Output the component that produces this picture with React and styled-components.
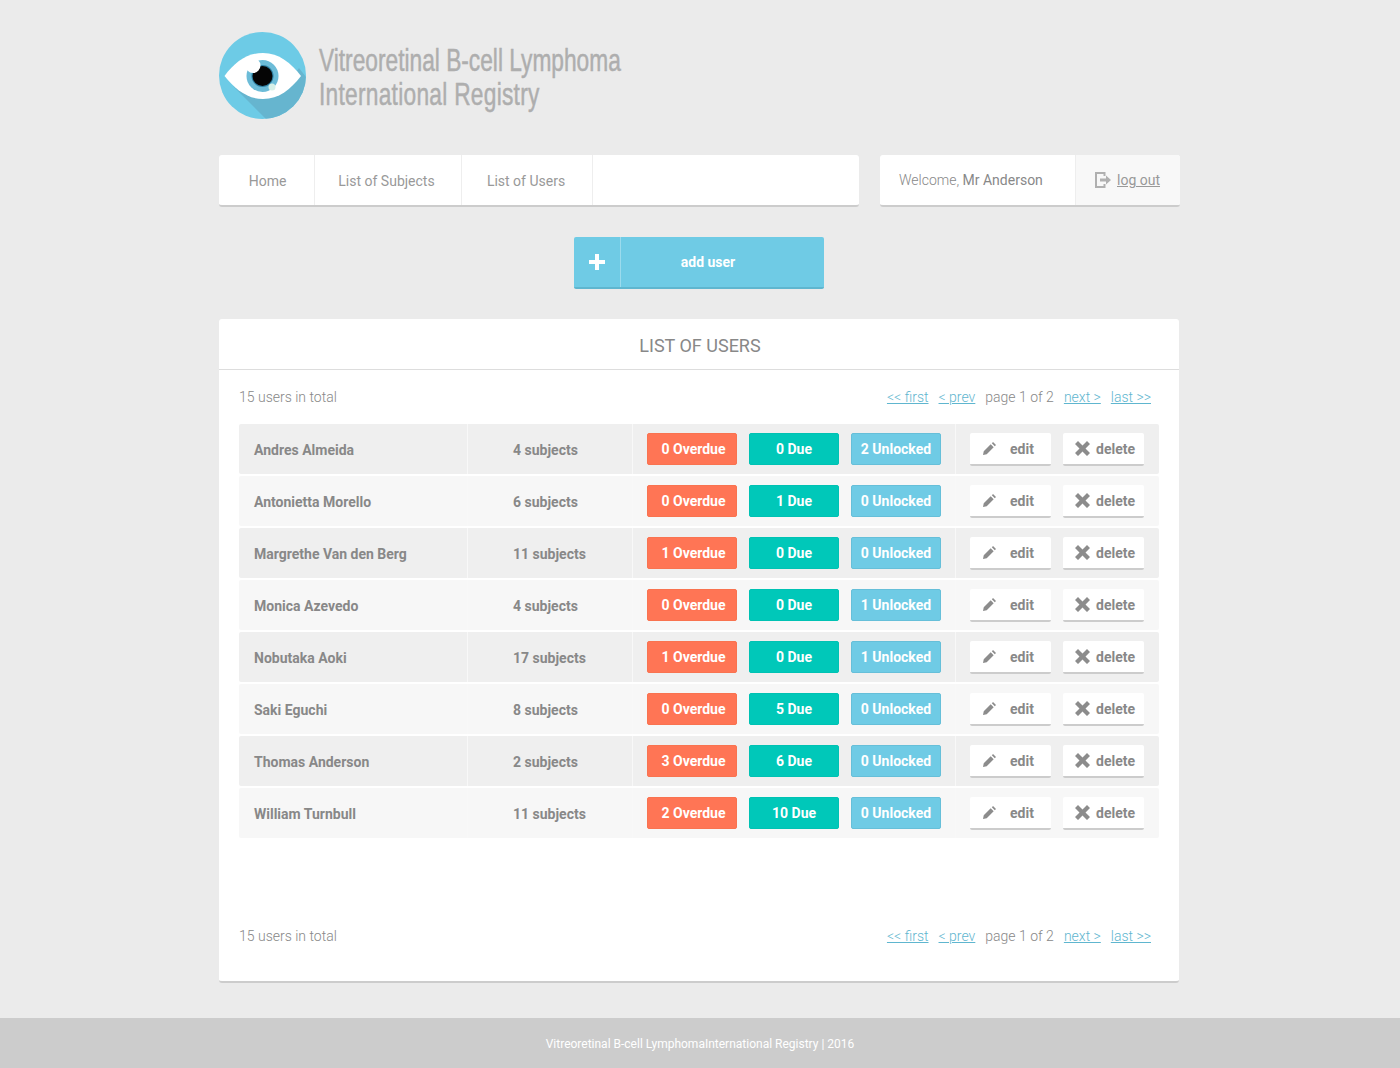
import React from 'react'
import styled, { createGlobalStyle } from 'styled-components'

const Global = createGlobalStyle`
  html, body { margin: 0; padding: 0; background: #ebebeb; }
  body { font-family: Roboto, "Liberation Sans", sans-serif; color: #888; }
  * { box-sizing: border-box; }
`

const Page = styled.div`
  width: 1400px;
  height: 1068px;
  display: flex;
  flex-direction: column;
  overflow: hidden;
`
const Wrap = styled.div`
  width: 961px;
  margin: 0 auto 0 219px;
  flex: 1;
`
const Header = styled.header`
  display: flex;
  align-items: flex-start;
  height: 155px;
  padding-top: 32px;
`
const Title = styled.h1`
  margin: 11px 0 0 13px;
  font-family: "Liberation Sans", sans-serif;
  font-weight: 400;
  font-size: 32px;
  line-height: 34px;
  color: #aeaeae;
  white-space: nowrap;
  -webkit-text-stroke: 0.5px #aeaeae;
  transform: scaleX(0.71);
  transform-origin: left top;
`
const TitleLine = styled.span`
  display: block;
  letter-spacing: ${p => p.$spacing || 0}px;
`
const TopBar = styled.div`
  display: flex;
  justify-content: space-between;
  height: 52px;
`
const Nav = styled.nav`
  width: 640px;
  display: flex;
  background: #fff;
  border-radius: 3px;
  border-bottom: 2px solid #ccc;
`
const NavItem = styled.a`
  width: ${p => p.$w}px;
  display: flex;
  align-items: center;
  justify-content: center;
  padding: 2px ${p => p.$right || 0}px 0 ${p => p.$left || 0}px;
  font-size: 14px;
  color: #999;
  border-right: 1px solid #eee;
`
const UserBox = styled.div`
  width: 300px;
  display: flex;
  background: #fff;
  border-radius: 3px;
  border-bottom: 2px solid #ccc;
  overflow: hidden;
`
const Welcome = styled.div`
  width: 195px;
  padding: 17px 0 0 19px;
  font-size: 14px;
  font-weight: 300;
  color: #888;
  b { font-weight: 400; color: #888; }
`
const Logout = styled.a`
  flex: 1;
  display: flex;
  align-items: center;
  gap: 6px;
  padding-left: 19px;
  background: #f8f8f8;
  border-left: 1px solid #eee;
  font-size: 14px;
  color: #999;
  span { text-decoration: underline; }
`
const AddRow = styled.div`
  display: flex;
  justify-content: center;
  padding: 30px 1px 30px 0;
`
const AddButton = styled.button`
  width: 250px;
  height: 52px;
  padding: 0;
  display: flex;
  background: #6fcbe5;
  border: 0;
  border-bottom: 2px solid #5fb6cf;
  border-radius: 2px;
  color: #fff;
  font-family: inherit;
  font-size: 14px;
  font-weight: 700;
`
const AddIcon = styled.span`
  width: 47px;
  display: flex;
  align-items: center;
  justify-content: center;
  border-right: 1px solid #9bdbed;
`
const AddLabel = styled.span`
  flex: 1;
  display: flex;
  align-items: center;
  justify-content: center;
  padding-right: 29px;
`
const Panel = styled.section`
  width: 960px;
  height: 664px;
  background: #fff;
  border-radius: 3px;
  border-bottom: 2px solid #ccc;
  display: flex;
  flex-direction: column;
`
const PanelTitle = styled.h2`
  margin: 0;
  height: 51px;
  display: flex;
  align-items: center;
  justify-content: center;
  padding: 3px 0 0 2px;
  font-size: 18px;
  font-weight: 400;
  color: #888;
  border-bottom: 1px solid #ddd;
`
const Pager = styled.div`
  display: flex;
  justify-content: space-between;
  align-items: center;
  padding: 0 28px 0 20px;
  height: ${p => p.$h}px;
  font-size: 14px;
  font-weight: 300;
  color: #888;
`
const PageLinks = styled.div`
  display: flex;
  gap: 10px;
  align-items: center;
`
const PageLink = styled.a`
  color: #5fb6cf;
  text-decoration: underline;
`
const Table = styled.div`
  margin: 0 20px;
  display: flex;
  flex-direction: column;
  gap: 2px;
  height: 495px;
`
const Row = styled.div`
  height: 50px;
  display: grid;
  grid-template-columns: 229px 165px 323px 203px;
  background: ${p => (p.$odd ? '#efefef' : '#f7f7f7')};
  border-radius: 2px;
`
const Cell = styled.div`
  display: flex;
  align-items: center;
  border-right: ${p => (p.$last ? 0 : '1px solid #f8f8f8')};
  font-size: 14px;
  font-weight: 700;
  color: #888;
`
const NameCell = styled(Cell)`
  padding: 2px 0 0 15px;
`
const SubjectCell = styled(Cell)`
  padding: 2px 0 0 45px;
`
const BadgeCell = styled(Cell)`
  padding: 0 0 1px 14px;
  gap: 12px;
`
const ActionCell = styled(Cell)`
  padding: 1px 0 0 14px;
  gap: 12px;
`
const Badge = styled.span`
  width: 90px;
  height: 32px;
  display: flex;
  align-items: center;
  justify-content: center;
  padding-left: ${p => p.$pad}px;
  border-radius: 2px;
  color: #fff;
  font-size: 14px;
  font-weight: 700;
  white-space: nowrap;
  background: ${p => p.$bg};
  border: 1px solid ${p => p.$line};
`
const Action = styled.button`
  width: 81px;
  height: 33px;
  display: flex;
  align-items: center;
  padding: 0 0 0 ${p => p.$pad}px;
  gap: ${p => p.$gap}px;
  background: #fff;
  border: 0;
  border-bottom: 2px solid #ccc;
  border-radius: 2px;
  color: #888;
  font-family: inherit;
  font-size: 14px;
  font-weight: 700;
`
const Footer = styled.footer`
  height: 50px;
  padding-top: 2px;
  background: #ccc;
  display: flex;
  align-items: center;
  justify-content: center;
  font-size: 12px;
  color: #fff;
`

const users = [
  ['Andres Almeida', 4, 0, 0, 2],
  ['Antonietta Morello', 6, 0, 1, 0],
  ['Margrethe Van den Berg', 11, 1, 0, 0],
  ['Monica Azevedo', 4, 0, 0, 1],
  ['Nobutaka Aoki', 17, 1, 0, 1],
  ['Saki Eguchi', 8, 0, 5, 0],
  ['Thomas Anderson', 2, 3, 6, 0],
  ['William Turnbull', 11, 2, 10, 0],
]

const Logo = () => (
  <svg width="87" height="87" viewBox="0 0 87 87">
    <defs>
      <clipPath id="disc"><circle cx="43.5" cy="43.5" r="43.5" /></clipPath>
    </defs>
    <circle cx="43.5" cy="43.5" r="43.5" fill="#6dcbe6" />
    <path d="M14 54 L47 87 L87 87 L87 45 L80 36 C66 56 34 66 14 54Z" fill="#66b5cf" clipPath="url(#disc)" />
    <path d="M5.500 44 C16 30 28 21 44 21 C60 21 72 31 82 44 C72 57 60 67 44 67 C28 67 16 57 5.500 44Z" fill="#fff" />
    <circle cx="43.500" cy="44" r="16" fill="#6cbcd8" />
    <circle cx="43.500" cy="44" r="11" fill="#2d7d9f" />
    <circle cx="43.500" cy="44" r="10" fill="#050505" />
    <circle cx="34" cy="33.500" r="7.500" fill="#fff" />
    <circle cx="53" cy="55" r="3.500" fill="#d6f0e8" />
  </svg>
)

const LogoutIcon = () => (
  <svg width="16" height="16" viewBox="0 0 16 16" fill="none">
    <path d="M9.500 4V1H1v14h8.500v-3" stroke="#b0b0b0" strokeWidth="2" />
    <path d="M5 6.500h6V3.500L16 8l-5 4.500v-3H5z" fill="#b0b0b0" />
  </svg>
)

const PlusIcon = () => (
  <svg width="16" height="16" viewBox="0 0 16 16">
    <path d="M6 0h4v6h6v4h-6v6H6v-6H0V6h6z" fill="#fff" />
  </svg>
)

const PencilIcon = () => (
  <svg width="13" height="13" viewBox="0 0 14 14">
    <path d="M0 14l.8-4L8.300 2.500l3.200 3.200L4 13.200z M9.500 1.300L10.800 0 14 3.200l-1.300 1.300z" fill="#8c8c8c" />
  </svg>
)

const CrossIcon = () => (
  <svg width="15" height="15" viewBox="0 0 15 15">
    <path d="M3 0l4.500 4.500L12 0l3 3-4.500 4.500L15 12l-3 3-4.500-4.500L3 15l-3-3 4.500-4.500L0 3z" fill="#8c8c8c" />
  </svg>
)

const Pagination = ({ h }) => (
  <Pager $h={h}>
    <span>15 users in total</span>
    <PageLinks>
      <PageLink>&lt;&lt; first</PageLink>
      <PageLink>&lt; prev</PageLink>
      <span>page 1 of 2</span>
      <PageLink>next &gt;</PageLink>
      <PageLink>last &gt;&gt;</PageLink>
    </PageLinks>
  </Pager>
)

const App = () => (
  <Page>
    <Global />
    <Wrap>
      <Header>
        <Logo />
        <Title>
          <TitleLine>Vitreoretinal B-cell Lymphoma</TitleLine>
          <TitleLine $spacing={0.38}>International Registry</TitleLine>
        </Title>
      </Header>
      <TopBar>
        <Nav>
          <NavItem $w={96} $left={2}>Home</NavItem>
          <NavItem $w={147} $right={3}>List of Subjects</NavItem>
          <NavItem $w={131} $right={2}>List of Users</NavItem>
        </Nav>
        <UserBox>
          <Welcome>Welcome, <b>Mr Anderson</b></Welcome>
          <Logout><LogoutIcon /><span>log out</span></Logout>
        </UserBox>
      </TopBar>
      <AddRow>
        <AddButton>
          <AddIcon><PlusIcon /></AddIcon>
          <AddLabel>add user</AddLabel>
        </AddButton>
      </AddRow>
      <Panel>
        <PanelTitle>LIST OF USERS</PanelTitle>
        <Pagination h={54} />
        <Table>
          {users.map(([name, subjects, overdue, due, unlocked], i) => (
            <Row key={name} $odd={i % 2 === 0}>
              <NameCell>{name}</NameCell>
              <SubjectCell>{subjects} subjects</SubjectCell>
              <BadgeCell>
                <Badge $bg="#ff7555" $line="#f97350" $pad={3}>{overdue} Overdue</Badge>
                <Badge $bg="#00c8b9" $line="#00c2b3" $pad={0}>{due} Due</Badge>
                <Badge $bg="#6fcbe5" $line="#66bfd9" $pad={0}>{unlocked} Unlocked</Badge>
              </BadgeCell>
              <ActionCell $last>
                <Action $pad={13} $gap={14}><PencilIcon />edit</Action>
                <Action $pad={12} $gap={6}><CrossIcon />delete</Action>
              </ActionCell>
            </Row>
          ))}
        </Table>
        <Pagination h={34} />
      </Panel>
    </Wrap>
    <Footer>Vitreoretinal B-cell LymphomaInternational Registry | 2016</Footer>
  </Page>
)

export default App
